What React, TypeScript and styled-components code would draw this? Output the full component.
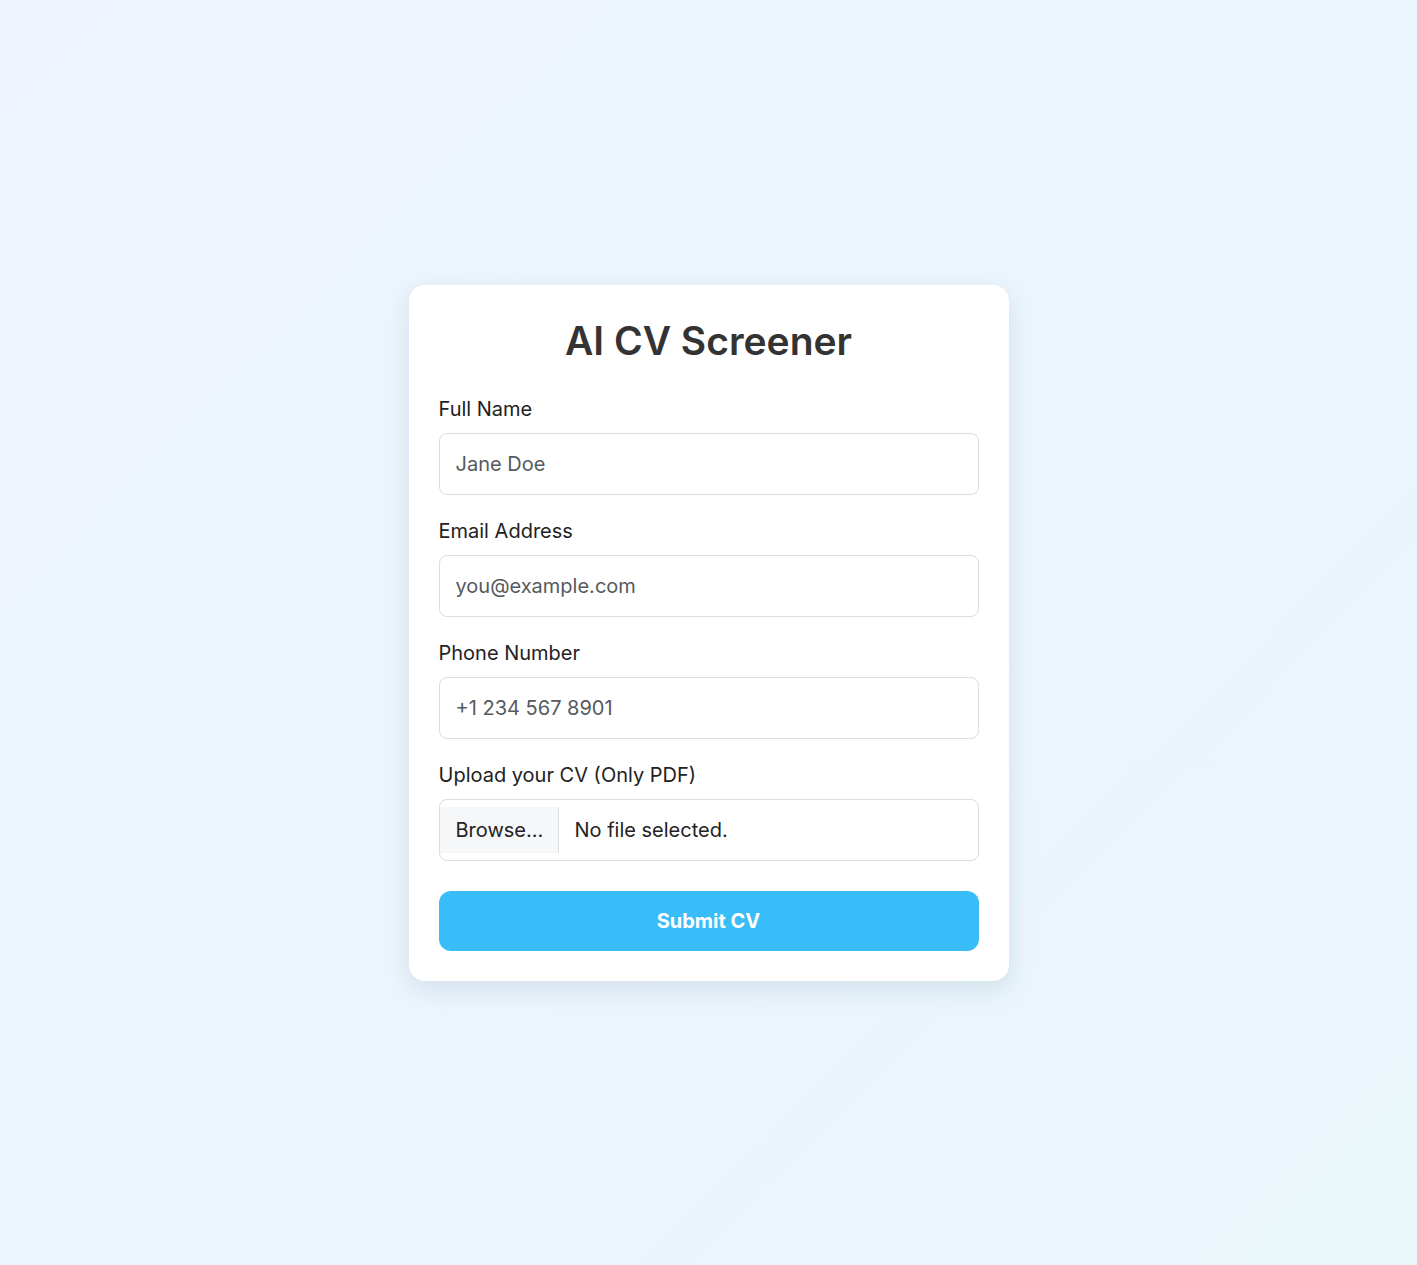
import * as React from "react";
import styled, { createGlobalStyle } from "styled-components";

const GlobalStyle = createGlobalStyle`
  html, body {
    margin: 0;
    padding: 0;
  }
  body {
    font-family: Inter, "Noto Sans", sans-serif;
    color: #222;
  }
  * {
    box-sizing: border-box;
  }
`;

const fields = [
  { label: "Full Name", placeholder: "Jane Doe", type: "text" },
  { label: "Email Address", placeholder: "you@example.com", type: "email" },
  { label: "Phone Number", placeholder: "+1 234 567 8901", type: "tel" },
];

const App = () => {
  return (
    <>
      <GlobalStyle />
      <Page>
        <Card>
          <Title>AI CV Screener</Title>
          <Form onSubmit={(e) => e.preventDefault()}>
            {fields.map((f) => (
              <Field key={f.label}>
                <Label>{f.label}</Label>
                <Input type={f.type} placeholder={f.placeholder} />
              </Field>
            ))}
            <Field>
              <Label>Upload your CV (Only PDF)</Label>
              <FileBox>
                <BrowseButton type="button">Browse...</BrowseButton>
                <FileName>No file selected.</FileName>
              </FileBox>
            </Field>
            <SubmitButton type="submit">Submit CV</SubmitButton>
          </Form>
        </Card>
      </Page>
    </>
  );
};

export default App;

const Page = styled.div`
  min-height: 1265px;
  display: flex;
  align-items: center;
  justify-content: center;
  background: linear-gradient(135deg, #eef4ff 0%, #e9f6fa 100%);
`;

const Card = styled.div`
  width: 600px;
  background: #ffffff;
  border-radius: 16px;
  padding: 30px;
  box-shadow: 0 8px 24px rgba(100, 130, 160, 0.18);
`;

const Title = styled.h1`
  margin: 0 0 30px;
  text-align: center;
  font-size: 39px;
  font-weight: 600;
  line-height: 52px;
  color: #333333;
`;

const Form = styled.form`
  display: flex;
  flex-direction: column;
`;

const Field = styled.div`
  display: flex;
  flex-direction: column;
  margin-bottom: 24px;
`;

const Label = styled.label`
  font-size: 20px;
  line-height: 24px;
  color: #222;
  margin-bottom: 12px;
`;

const Input = styled.input`
  height: 62px;
  width: 100%;
  padding: 0 16px;
  border: 1px solid #dcdde2;
  border-radius: 8px;
  font-family: inherit;
  font-size: 20px;
  color: #222;
  outline: none;
  &::placeholder {
    color: #555a60;
  }
`;

const FileBox = styled.div`
  height: 62px;
  display: flex;
  align-items: center;
  border: 1px solid #dcdde2;
  border-radius: 8px;
  padding: 7px 0;
  overflow: hidden;
`;

const BrowseButton = styled.button`
  height: 100%;
  width: 119px;
  border: 0;
  border-right: 1px solid #dcdde2;
  background: #f6f7f9;
  font-family: inherit;
  font-size: 20px;
  color: #222;
  padding: 0 0 0 16px;
  text-align: left;
`;

const FileName = styled.span`
  margin-left: 16px;
  font-size: 20px;
  color: #222;
`;

const SubmitButton = styled.button`
  margin-top: 6px;
  height: 60px;
  border: 0;
  border-radius: 12px;
  background: #38bdf8;
  color: #ffffff;
  font-family: inherit;
  font-size: 20px;
  font-weight: 700;
  cursor: pointer;
`;
